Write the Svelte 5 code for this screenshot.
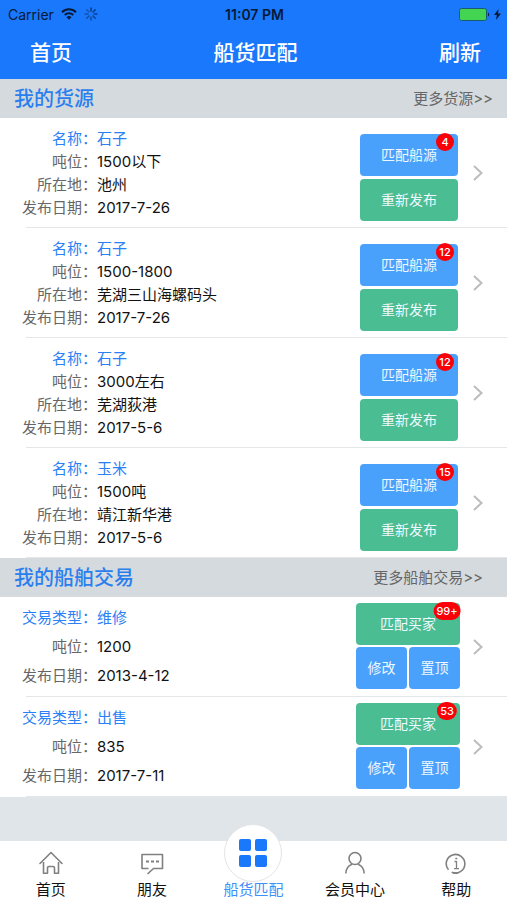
<script lang="ts">
  type Field = { label: string; value: string };
  type Entry = { fields: Field[]; count: string };

  function cargo(name: string, tonnage: string, place: string, date: string, count: string): Entry {
    return {
      count,
      fields: [
        { label: '名称', value: name },
        { label: '吨位', value: tonnage },
        { label: '所在地', value: place },
        { label: '发布日期', value: date },
      ],
    };
  }

  function trade(type: string, tonnage: string, date: string, count: string): Entry {
    return {
      count,
      fields: [
        { label: '交易类型', value: type },
        { label: '吨位', value: tonnage },
        { label: '发布日期', value: date },
      ],
    };
  }

  const cargoes = [
    cargo('石子', '1500以下', '池州', '2017-7-26', '4'),
    cargo('石子', '1500-1800', '芜湖三山海螺码头', '2017-7-26', '12'),
    cargo('石子', '3000左右', '芜湖荻港', '2017-5-6', '12'),
    cargo('玉米', '1500吨', '靖江新华港', '2017-5-6', '15'),
  ];

  const trades = [
    trade('维修', '1200', '2013-4-12', '99+'),
    trade('出售', '835', '2017-7-11', '53'),
  ];

  const tabs = [
    { id: 'home', label: '首页' },
    { id: 'friends', label: '朋友' },
    { id: 'match', label: '船货匹配' },
    { id: 'member', label: '会员中心' },
    { id: 'help', label: '帮助' },
  ];

  let active = $state('match');

  const spokes = [0, 45, 90, 135, 180, 225, 270, 315];
</script>

{#snippet details(fields: Field[])}
  <dl>
    {#each fields as field, i}
      <div class="field" class:lead={i === 0}>
        <dt>{field.label}：</dt>
        <dd>{field.value}</dd>
      </div>
    {/each}
  </dl>
{/snippet}

{#snippet chevron()}
  <a class="more-link" href="#detail" aria-label="详情">
    <svg width="12" height="18" viewBox="0 0 12 18">
      <path d="M2 2l7.500 7L2 16" fill="none" stroke="#bcbcc0" stroke-width="2" />
    </svg>
  </a>
{/snippet}

<div class="page">
  <header>
    <div class="status">
      <div class="carrier">
        <span>Carrier</span>
        <svg width="16" height="12" viewBox="0 0 16 12" fill="none" stroke="#061a38" stroke-width="2">
          <path d="M1 4.200a10 10 0 0 1 14 0M3.700 7a6.200 6.200 0 0 1 8.600 0" />
          <path d="M8 11.800L5.500 9.200a3.600 3.600 0 0 1 5 0z" fill="#061a38" stroke="none" />
        </svg>
        <svg width="14" height="14" viewBox="0 0 14 14" stroke="#0b3a80" stroke-width="1.500" stroke-linecap="round">
          {#each spokes as angle, i}
            <path d="M7 1v3" transform="rotate({angle} 7 7)" opacity={1 - i * 0.07} />
          {/each}
        </svg>
      </div>
      <b>11:07 PM</b>
      <div class="power">
        <svg width="31" height="13" viewBox="0 0 31 13">
          <rect x="0.500" y="0.500" width="27" height="12" rx="2" fill="#43d551" stroke="#1c5a72" />
          <path d="M29 4.500c1.600.600 1.600 3.400 0 4z" fill="#06244c" />
        </svg>
        <svg width="7" height="11" viewBox="0 0 7 11">
          <path d="M4.600 0L0 6h2.800L2 11l5-6.500H4z" fill="#061a38" />
        </svg>
      </div>
    </div>
    <nav class="bar">
      <button>首页</button>
      <h1>船货匹配</h1>
      <button>刷新</button>
    </nav>
  </header>

  <main>
    <section>
      <div class="heading">
        <h2>我的货源</h2>
        <a href="#cargo">更多货源&gt;&gt;</a>
      </div>
      <ul>
        {#each cargoes as item}
          <li>
            {@render details(item.fields)}
            <div class="actions">
              <button class="blue">匹配船源<span class="badge">{item.count}</span></button>
              <button class="green">重新发布</button>
            </div>
            {@render chevron()}
          </li>
        {/each}
      </ul>
    </section>

    <section class="trades">
      <div class="heading">
        <h2>我的船舶交易</h2>
        <a href="#trade">更多船舶交易&gt;&gt;</a>
      </div>
      <ul>
        {#each trades as item}
          <li>
            {@render details(item.fields)}
            <div class="actions">
              <button class="green wide">匹配买家<span class="badge">{item.count}</span></button>
              <button class="blue">修改</button>
              <button class="blue">置顶</button>
            </div>
            {@render chevron()}
          </li>
        {/each}
      </ul>
    </section>
  </main>

  <nav class="tabs">
    {#each tabs as tab}
      <button class:active={active === tab.id} onclick={() => (active = tab.id)}>
        {#if tab.id === 'match'}
          <span class="disc">
            <svg width="28" height="28" viewBox="0 0 28 28" fill="#1a78fa">
              <rect width="12" height="12" rx="2" />
              <rect x="16" width="12" height="12" rx="2" />
              <rect y="16" width="12" height="12" rx="2" />
              <rect x="16" y="16" width="12" height="12" rx="2" />
            </svg>
          </span>
        {:else}
          <svg width="24" height="24" viewBox="0 0 24 24" fill="none" stroke="#808080" stroke-width="1.600" stroke-linejoin="round">
            {#if tab.id === 'home'}
              <path d="M1 12.500L12 1.500l11 11" stroke-linecap="round" />
              <path d="M4.500 11v11.200h4V17q0-1.500 1.500-1.500h4q1.500 0 1.500 1.500v5.200h4V11" />
            {:else if tab.id === 'friends'}
              <path d="M8.500 17.500H2V3.500h20.500v14h-9L7.500 23" />
              <path d="M6 10.500h13" stroke-dasharray="3 2" stroke-width="1.800" />
            {:else if tab.id === 'member'}
              <circle cx="12" cy="7.500" r="6" />
              <path d="M2.800 22.500c.3-5 3-8 6.200-9.200M21.200 22.500c-.3-5-3-8-6.200-9.200" />
            {:else}
              <path d="M4.500 18.800a9.300 9.300 0 1 1 3.200 2.400" />
              <path d="M9.200 21.700a9.300 9.300 0 0 0 5 .1" />
              <path d="M10.500 10.500h2v7M10 17.700h5M11.300 7.500h2" stroke-width="1.300" />
            {/if}
          </svg>
        {/if}
        <span class="name">{tab.label}</span>
      </button>
    {/each}
  </nav>
</div>

<style>
  :global(body) {
    margin: 0;
    background: #e0e5e9;
  }
  .page {
    min-height: 100vh;
    display: flex;
    flex-direction: column;
    font-family: Inter, 'Noto Sans CJK SC', sans-serif;
    font-size: 15px;
    color: #111;
  }
  button {
    border: 0;
    padding: 0;
    background: none;
    font: inherit;
    color: inherit;
    cursor: pointer;
  }
  a {
    text-decoration: none;
  }
  h1,
  h2,
  ul,
  dl,
  dd {
    margin: 0;
    padding: 0;
  }

  header {
    background: #1a78fd;
  }
  .status {
    display: grid;
    grid-template-columns: 1fr auto 1fr;
    align-items: center;
    height: 28px;
    padding: 0 6px 0 8px;
    box-sizing: border-box;
    font-size: 14px;
    color: #061a38;
  }
  .carrier,
  .power {
    display: flex;
    align-items: center;
    gap: 7px;
  }
  .power {
    justify-content: flex-end;
    gap: 4px;
  }
  .status b {
    font-weight: 600;
  }
  .bar {
    display: grid;
    grid-template-columns: 1fr auto 1fr;
    align-items: center;
    height: 51px;
    padding: 0 26px 6px 30px;
    box-sizing: border-box;
    font-size: 21px;
    font-weight: 500;
    color: #fff;
  }
  .bar h1 {
    font-size: 21px;
    font-weight: 500;
  }
  .bar button {
    justify-self: start;
  }
  .bar h1 + button {
    justify-self: end;
  }

  main {
    flex: 1;
  }
  .heading {
    display: flex;
    align-items: center;
    justify-content: space-between;
    height: 39px;
    padding: 0 14px 2px;
    box-sizing: border-box;
    background: #d5dade;
  }
  .heading h2 {
    font-size: 20px;
    font-weight: 500;
    color: #2a7fee;
  }
  .heading a {
    color: #666;
  }
  .trades .heading a {
    padding-right: 10px;
  }

  ul {
    list-style: none;
    background: #fff;
  }
  li {
    position: relative;
    display: flex;
    align-items: center;
    height: 110px;
  }
  li::after {
    content: '';
    position: absolute;
    left: 26px;
    right: 0;
    bottom: 0;
    border-bottom: 1px solid #e4e6e8;
  }
  .trades li {
    height: 100px;
  }
  dl {
    flex: 1;
  }
  .field {
    display: flex;
    line-height: 23px;
  }
  .trades dl {
    padding-bottom: 2px;
  }
  .trades .field {
    line-height: 29px;
  }
  dt {
    width: 97px;
    text-align: right;
    color: #666;
  }
  .lead dt,
  .lead dd {
    color: #2a80f5;
  }

  .actions {
    display: grid;
    gap: 3px;
    width: 98px;
    padding-top: 16px;
    align-self: flex-start;
  }
  .actions button {
    position: relative;
    height: 42px;
    padding-bottom: 2px;
    border-radius: 4px;
    font-size: 14px;
    color: #eef8ff;
  }
  .trades .actions {
    grid-template-columns: 1fr 1fr;
    gap: 2px;
    width: 104px;
    padding-top: 6px;
  }
  .actions .blue {
    background: #4aa1fc;
  }
  .actions .green {
    background: #4bbd92;
  }
  .actions .wide {
    grid-column: span 2;
  }
  .actions .badge {
    position: absolute;
    top: -1px;
    right: 13px;
    transform: translateX(50%);
    box-sizing: border-box;
    min-width: 18px;
    padding: 0 3px;
    border-radius: 9px;
    background: #fb0007;
    color: #fff;
    font-size: 11px;
    font-weight: 500;
    line-height: 18px;
  }
  .more-link {
    display: flex;
    width: 35px;
    margin-left: 14px;
  }
  .trades .more-link {
    margin-left: 12px;
  }

  .tabs {
    position: sticky;
    bottom: 0;
    display: grid;
    grid-template-columns: repeat(5, 1fr);
    grid-template-rows: 59px;
    background: #fff;
  }
  .tabs button {
    display: flex;
    flex-direction: column;
    align-items: center;
    justify-content: flex-end;
    min-height: 0;
  }
  .tabs svg,
  .disc {
    flex-shrink: 0;
  }
  .tabs .active {
    color: #3d8ffb;
  }
  .name {
    line-height: 20px;
    margin-top: 5px;
    white-space: nowrap;
  }
  .disc {
    display: flex;
    align-items: center;
    justify-content: center;
    width: 56px;
    height: 56px;
    border: 1px solid #e2e4e6;
    border-radius: 50%;
    background: #fff;
  }
  .disc + .name {
    margin-top: -2px;
  }
</style>
